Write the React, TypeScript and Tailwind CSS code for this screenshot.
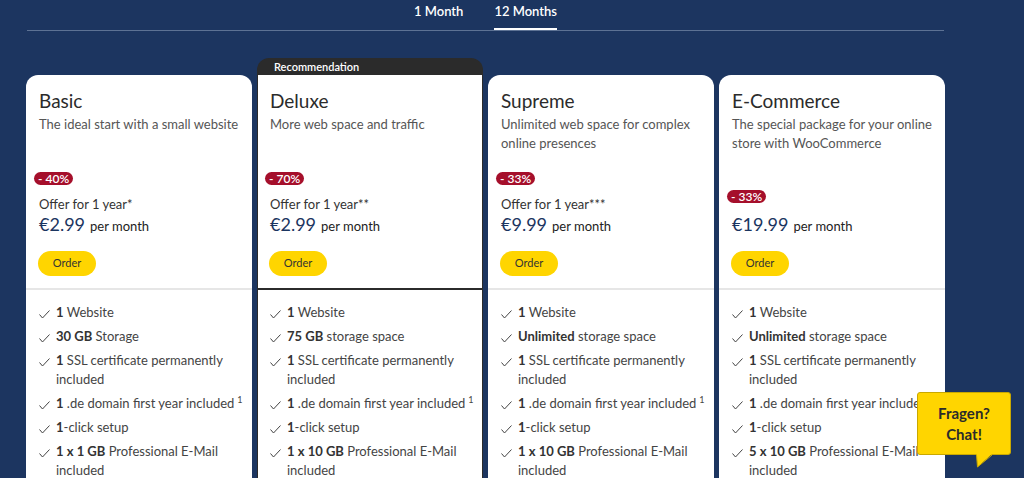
import type { ReactNode } from "react";

type Plan = {
  name: string;
  description: string;
  discount: string;
  offer?: string;
  price: string;
  recommended?: boolean;
  features: ReactNode[];
};

const Sup = () => <span className="relative -top-[5px] ml-[3px] text-[9px] leading-none">1</span>;

const plans: Plan[] = [
  {
    name: "Basic",
    description: "The ideal start with a small website",
    discount: "- 40%",
    offer: "Offer for 1 year*",
    price: "€2.99",
    features: [
      <><b>1</b> Website</>,
      <><b>30 GB</b> Storage</>,
      <><b>1</b> SSL certificate permanently included</>,
      <><b>1</b> .de domain first year included<Sup /></>,
      <><b>1</b>-click setup</>,
      <><b>1 x 1 GB</b> Professional E-Mail included</>,
    ],
  },
  {
    name: "Deluxe",
    description: "More web space and traffic",
    discount: "- 70%",
    offer: "Offer for 1 year**",
    price: "€2.99",
    recommended: true,
    features: [
      <><b>1</b> Website</>,
      <><b>75 GB</b> storage space</>,
      <><b>1</b> SSL certificate permanently included</>,
      <><b>1</b> .de domain first year included<Sup /></>,
      <><b>1</b>-click setup</>,
      <><b>1 x 10 GB</b> Professional E-Mail included</>,
    ],
  },
  {
    name: "Supreme",
    description: "Unlimited web space for complex online presences",
    discount: "- 33%",
    offer: "Offer for 1 year***",
    price: "€9.99",
    features: [
      <><b>1</b> Website</>,
      <><b>Unlimited</b> storage space</>,
      <><b>1</b> SSL certificate permanently included</>,
      <><b>1</b> .de domain first year included<Sup /></>,
      <><b>1</b>-click setup</>,
      <><b>1 x 10 GB</b> Professional E-Mail included</>,
    ],
  },
  {
    name: "E-Commerce",
    description: "The special package for your online store with WooCommerce",
    discount: "- 33%",
    price: "€19.99",
    features: [
      <><b>1</b> Website</>,
      <><b>Unlimited</b> storage space</>,
      <><b>1</b> SSL certificate permanently included</>,
      <><b>1</b> .de domain first year included<Sup /></>,
      <><b>1</b>-click setup</>,
      <><b>5 x 10 GB</b> Professional E-Mail included</>,
    ],
  },
];

function Check() {
  return (
    <svg width="11" height="9" viewBox="0 0 11 9" className="mt-[7px] shrink-0">
      <polyline points="0.5,4.5 3.5,8 10.5,0.5" fill="none" stroke="#444" strokeWidth="1" />
    </svg>
  );
}

function PlanCard({ plan }: { plan: Plan }) {
  return (
    <div className="flex flex-col">
      {plan.recommended ? (
        <div className="h-[17px] bg-[#2b2b2b] rounded-t-[12px] px-[17px] text-white text-[11px] font-semibold leading-[17px]">
          Recommendation
        </div>
      ) : (
        <div className="h-[17px]"></div>
      )}
      <div
        className={
          plan.recommended
            ? "bg-white h-[460px] border-x border-[#2b2b2b]"
            : "bg-white h-[460px] rounded-t-[12px]"
        }
      >
        <section
          className={
            plan.recommended
              ? "h-[215px] flex flex-col justify-between px-[12px] pt-[14px] pb-[12px] border-b-2 border-[#2b2b2b]"
              : "h-[215px] flex flex-col justify-between px-[13px] pt-[14px] pb-[12px] border-b-2 border-[#e6e6e6]"
          }
        >
          <div>
            <h2 className="text-[19px] leading-[24px] text-[#2b2b2b]">{plan.name}</h2>
            <p className="mt-[2px] text-[13px] leading-[19px] text-[#555]">{plan.description}</p>
          </div>
          <div className="flex flex-col items-start">
            <span
              className={
                plan.offer
                  ? "-ml-[5px] mb-[11px] rounded-full bg-[#a50f2b] px-[4px] text-[12px] leading-[13px] font-semibold text-white"
                  : "-ml-[5px] mb-[9px] rounded-full bg-[#a50f2b] px-[4px] text-[12px] leading-[13px] font-semibold text-white"
              }
            >
              {plan.discount}
            </span>
            {plan.offer && (
              <p className="text-[13px] leading-[16px] text-[#333]">{plan.offer}</p>
            )}
            <p className="leading-[24px] text-[#1b3560]">
              <span className="text-[18px]">{plan.price}</span>
              <span className="ml-[5px] text-[13px] text-[#222]">per month</span>
            </p>
            <button className="-ml-px mt-[13px] h-[25px] w-[58px] rounded-full bg-[#ffd500] text-[11px] text-[#333]">
              Order
            </button>
          </div>
        </section>
        <ul
          className={
            plan.recommended
              ? "flex flex-col gap-[5px] pl-[12px] pr-[2px] pt-[13px]"
              : "flex flex-col gap-[5px] pl-[13px] pr-[4px] pt-[13px]"
          }
        >
          {plan.features.map((feature, i) => (
            <li key={i} className="flex gap-[6px] text-[13px] leading-[19px] text-[#444] [&_b]:font-bold [&_b]:text-[#333]">
              <Check />
              <span>{feature}</span>
            </li>
          ))}
        </ul>
      </div>
    </div>
  );
}

export default function App() {
  return (
    <div className="relative h-[478px] w-full overflow-hidden bg-[#1c3560] font-['Lato',sans-serif]">
      <div className="ml-[26px] w-[919px]">
        <nav className="mx-px flex justify-center gap-[31px] border-b border-[#5d7294]">
          <button className="pt-px pb-[9px] text-[13px] leading-[20px] font-semibold text-white">1 Month</button>
          <button className="pt-px pb-[7px] text-[13px] leading-[20px] font-semibold text-white border-b-2 border-white">
            12 Months
          </button>
        </nav>
        <main className="mt-[27px] grid grid-cols-4 gap-[5px]">
          {plans.map((plan) => (
            <PlanCard key={plan.name} plan={plan} />
          ))}
        </main>
      </div>
      <div className="absolute left-[917px] top-[392px] w-[94px]">
        <div className="flex h-[63px] flex-col items-center justify-center rounded-[3px] border border-[#c9a800] bg-[#ffd500] text-[15px] font-bold leading-[21px] text-[#2b2b2b]">
          <span>Fragen?</span>
          <span>Chat!</span>
        </div>
        <svg width="17" height="14" viewBox="0 0 17 14" className="absolute left-[59px] top-[62px]">
          <polygon points="0.5,0 16,0 1.5,13" fill="#ffd500" />
          <polyline points="0.5,1 1.5,13 16,1" fill="none" stroke="#c9a800" strokeWidth="1" />
        </svg>
      </div>
    </div>
  );
}
